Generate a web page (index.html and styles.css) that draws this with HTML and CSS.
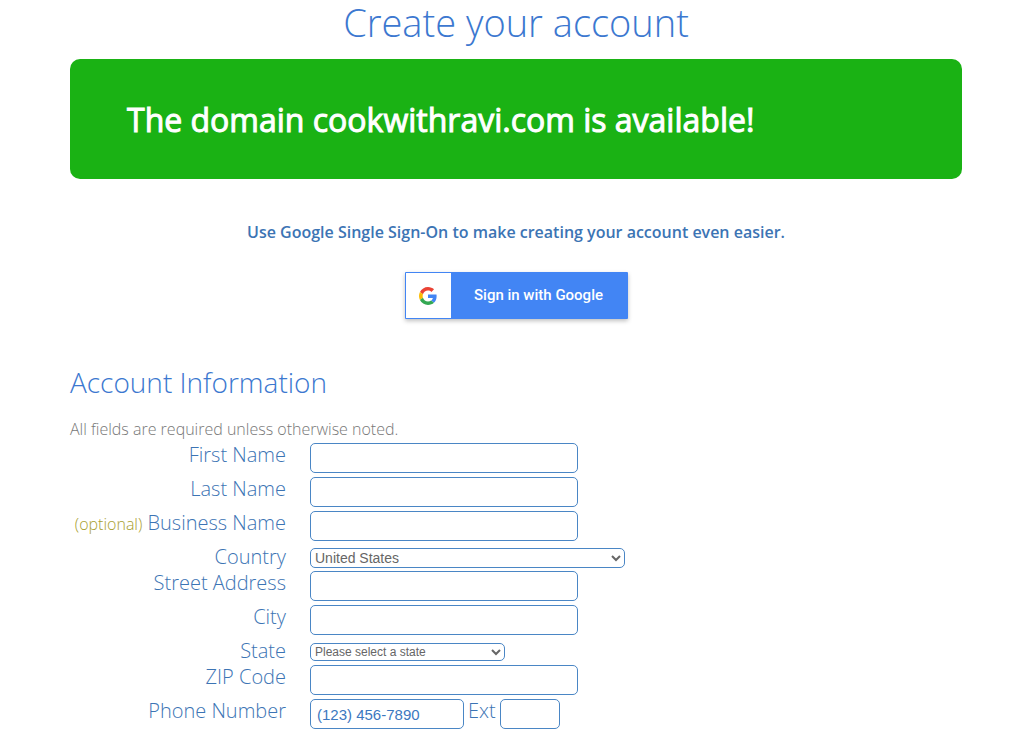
FILE: index.html
```html
<!DOCTYPE html>
<html lang="en">
<head>
    <meta charset="UTF-8">
    <title>Create your account</title>
    <link rel="stylesheet" href="styles.css">
</head>
<body>
<div class="container">
    <h1>Create your account</h1>

    <div class="domain-status">The domain cookwithravi.com is available!</div>

    <div class="sso">
        <p>Use Google Single Sign-On to make creating your account even easier.</p>
        <button type="button" class="google-btn">
            <span class="google-icon">
                <svg width="18" height="18" viewBox="0 0 48 48">
                    <path fill="#EA4335" d="M24 9.5c3.54 0 6.71 1.22 9.21 3.6l6.85-6.85C35.9 2.38 30.47 0 24 0 14.62 0 6.51 5.38 2.56 13.22l7.98 6.19C12.43 13.72 17.74 9.5 24 9.5z"/>
                    <path fill="#4285F4" d="M46.98 24.55c0-1.57-.15-3.09-.38-4.55H24v9.02h12.94c-.58 2.96-2.26 5.48-4.78 7.18l7.73 6c4.51-4.18 7.09-10.36 7.09-17.65z"/>
                    <path fill="#FBBC05" d="M10.53 28.59c-.48-1.45-.76-2.99-.76-4.59s.27-3.14.76-4.59l-7.98-6.19C.92 16.46 0 20.12 0 24c0 3.88.92 7.54 2.56 10.78l7.97-6.19z"/>
                    <path fill="#34A853" d="M24 48c6.48 0 11.93-2.13 15.89-5.81l-7.73-6c-2.15 1.45-4.92 2.3-8.16 2.3-6.26 0-11.57-4.22-13.47-9.91l-7.98 6.19C6.51 42.62 14.62 48 24 48z"/>
                </svg>
            </span>
            <span class="google-text">Sign in with Google</span>
        </button>
    </div>

    <h2>Account Information</h2>
    <p class="note">All fields are required unless otherwise noted.</p>

    <form>
        <div class="row">
            <label for="first-name">First Name</label>
            <input id="first-name" type="text">
        </div>
        <div class="row">
            <label for="last-name">Last Name</label>
            <input id="last-name" type="text">
        </div>
        <div class="row">
            <label for="business"><span class="optional">(optional)</span> Business Name</label>
            <input id="business" type="text">
        </div>
        <div class="row select-row">
            <label for="country">Country</label>
            <select id="country">
                <option>United States</option>
            </select>
        </div>
        <div class="row">
            <label for="street">Street Address</label>
            <input id="street" type="text">
        </div>
        <div class="row">
            <label for="city">City</label>
            <input id="city" type="text">
        </div>
        <div class="row select-row">
            <label for="state">State</label>
            <select id="state">
                <option>Please select a state</option>
            </select>
        </div>
        <div class="row">
            <label for="zip">ZIP Code</label>
            <input id="zip" type="text">
        </div>
        <div class="row">
            <label for="phone">Phone Number</label>
            <div class="phone">
                <input id="phone" type="text" placeholder="(123) 456-7890">
                <label for="ext">Ext</label>
                <input id="ext" type="text">
            </div>
        </div>
    </form>
</div>
</body>
</html>
```
FILE: styles.css
```css
* {
    box-sizing: border-box;
}

body {
    margin: 0;
    background: #fff;
    color: #777;
    font-family: "Open Sans", sans-serif;
    font-weight: 300;
}

.container {
    padding: 0 62px 0 70px;
}

h1, h2, p {
    margin: 0;
    font-weight: 300;
}

h1 {
    height: 59px;
    color: #3c78d0;
    font-size: 38px;
    line-height: 44px;
    text-align: center;
}

.domain-status {
    padding: 37px 57px 35px;
    border-radius: 10px;
    background: #1ab214;
    color: #fff;
    font-size: 32px;
    font-weight: 400;
    line-height: 48px;
    -webkit-text-stroke: 1px #fff;
}

.sso {
    padding: 40px 0 47px;
    text-align: center;
}

.sso p {
    margin-bottom: 27px;
    color: #3c74b4;
    font-size: 16px;
    font-weight: 600;
    line-height: 26px;
}

/* google sign in button */
.google-btn {
    display: inline-flex;
    width: 223px;
    height: 47px;
    padding: 1px;
    border: none;
    border-radius: 1px;
    background: #4285f4;
    box-shadow: 0 2px 4px rgba(0, 0, 0, .25);
    color: #fff;
    font-family: Roboto, sans-serif;
    font-size: 15px;
    font-weight: 500;
    line-height: 45px;
    vertical-align: top;
}

.google-icon {
    display: flex;
    align-items: center;
    justify-content: center;
    width: 45px;
    height: 45px;
    background: #fff;
}

.google-text {
    flex: 1;
}

h2 {
    color: #3c78d0;
    font-size: 28px;
    line-height: 32px;
}

.note {
    margin-top: 17px;
    font-size: 16px;
    line-height: 28px;
}

.row {
    display: grid;
    grid-template-columns: 216px 1fr;
    column-gap: 24px;
    height: 34px;
}

.row label {
    color: #3c74b4;
    font-size: 20px;
    line-height: 24px;
    text-align: right;
    white-space: nowrap;
}

.row .optional {
    color: #a8a030;
    font-size: 16px;
}

input, select {
    border: 1px solid #4a86c5;
    border-radius: 5px;
    background: #fff;
    font-family: "Liberation Sans", Arial, sans-serif;
}

input {
    width: 268px;
    height: 30px;
    padding: 0 6px;
    font-size: 15px;
}

input::placeholder {
    color: #3c78c0;
}

.select-row {
    height: 26px;
}

select {
    align-self: center;
    height: 20px;
    padding: 0;
    color: #666;
}

#country {
    width: 315px;
    font-size: 14px;
}

#state {
    width: 195px;
    height: 18px;
    font-size: 12px;
}

.phone {
    display: flex;
    gap: 4px;
}

#phone {
    width: 154px;
}

#ext {
    width: 60px;
}
```
